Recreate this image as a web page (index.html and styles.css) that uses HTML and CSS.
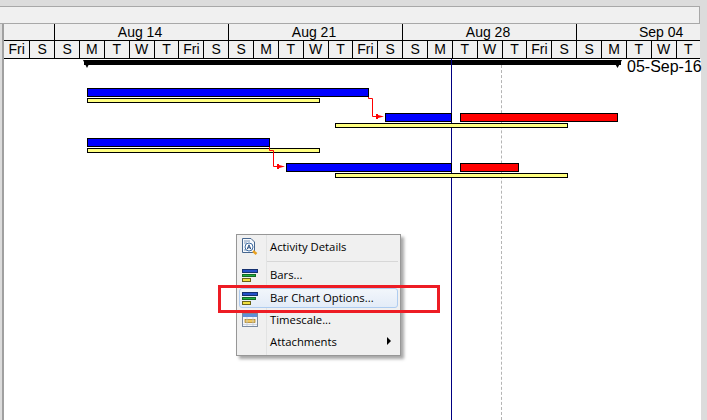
FILE: index.html
```html
<!DOCTYPE html>
<html>
<head>
    <title>Bar Chart</title>
    <link rel="stylesheet" href="styles.css">
</head>
<body>
    <div class="window">
        <div class="toolbar"></div>
        <div class="timescale">
            <div class="months">
                <div class="month first"></div>
                <div class="month">Aug 14</div>
                <div class="month">Aug 21</div>
                <div class="month">Aug 28</div>
                <div class="month last">Sep 04</div>
            </div>
            <div class="days">
                <div class="day fri">Fri</div><div class="day">S</div>
                <div class="day">S</div><div class="day">M</div><div class="day">T</div><div class="day">W</div><div class="day">T</div><div class="day">Fri</div><div class="day">S</div>
                <div class="day">S</div><div class="day">M</div><div class="day">T</div><div class="day">W</div><div class="day">T</div><div class="day">Fri</div><div class="day">S</div>
                <div class="day">S</div><div class="day">M</div><div class="day">T</div><div class="day">W</div><div class="day">T</div><div class="day">Fri</div><div class="day">S</div>
                <div class="day">S</div><div class="day">M</div><div class="day">T</div><div class="day">W</div><div class="day last">T</div>
            </div>
        </div>
        <div class="chart">
            <div class="summary"></div>
            <svg class="summary-caps" width="707" height="20">
                <polygon points="83,0 91,0 87,8"/>
                <polygon points="613,0 622,0 617.5,8"/>
            </svg>
            <div class="finish-date">05-Sep-16</div>

            <div class="today"></div>
            <div class="data-date"></div>

            <div class="bar blue b1"></div>
            <div class="bar yellow y1"></div>
            <div class="bar blue b2"></div>
            <div class="bar red r2"></div>
            <div class="bar yellow y2"></div>
            <div class="bar blue b3"></div>
            <div class="bar yellow y3"></div>
            <div class="bar blue b4"></div>
            <div class="bar red r4"></div>
            <div class="bar yellow y4"></div>

            <svg class="links" width="707" height="130">
                <path d="M368.5 38V39.5H372.5V57.5H378"/>
                <polygon points="376,55 378,55 378,56 384,57.5 378,59 378,60 376,60"/>
                <path d="M269.5 88V91.5H273.5V107.5H279"/>
                <polygon points="277,105 279,105 279,106 285,107.5 279,109 279,110 277,110"/>
            </svg>
        </div>

        <div class="menu">
            <div class="menu-item top">
                <svg class="icon" width="16" height="18" viewBox="0 0 16 18">
                    <path d="M0.5 0.5H9L12.5 4V14.5H0.5Z" fill="#f6f9fd" stroke="#47678f"/>
                    <path d="M2 3H8M2 5H5M2 12H4" stroke="#7f97b8"/>
                    <circle cx="7" cy="9" r="4" fill="#fff" stroke="#3f6da3"/>
                    <path d="M5.2 11.2L7 6.8L8.8 11.2M5.9 9.8H8.1" fill="none" stroke="#2a4f80"/>
                    <path d="M11 13L14.5 16" stroke="#e8a020" stroke-width="2.5"/>
                </svg>
                <span class="label">Activity Details</span>
            </div>
            <div class="menu-sep"></div>
            <div class="menu-item">
                <svg class="icon" width="16" height="13" viewBox="0 0 16 13">
                    <rect x=".5" y=".5" width="15" height="3" fill="#2450c8" stroke="#16306e"/>
                    <rect x=".5" y="5.5" width="13" height="2" fill="#22b040" stroke="#146a28"/>
                    <rect x=".5" y="9.5" width="8" height="3" fill="#f0e040" stroke="#6a6418"/>
                </svg>
                <span class="label">Bars...</span>
            </div>
            <div class="menu-item active">
                <svg class="icon" width="16" height="13" viewBox="0 0 16 13">
                    <rect x=".5" y=".5" width="15" height="3" fill="#2450c8" stroke="#16306e"/>
                    <rect x=".5" y="5.5" width="13" height="2" fill="#22b040" stroke="#146a28"/>
                    <rect x=".5" y="9.5" width="8" height="3" fill="#f0e040" stroke="#6a6418"/>
                </svg>
                <span class="label">Bar Chart Options...</span>
            </div>
            <div class="menu-item">
                <svg class="icon" width="16" height="14" viewBox="0 0 16 14">
                    <rect x=".5" y=".5" width="15" height="13" fill="#f4f6fa" stroke="#7a8aa0"/>
                    <rect x="1" y="1" width="14" height="3" fill="#5f8fd8"/>
                    <rect x="3" y="6.5" width="10" height="3" fill="#f0c860" stroke="#a07820" stroke-width=".7"/>
                    <path d="M1 11.5H15M5 4V13M11 4V13" stroke="#c0c8d4" stroke-width=".7"/>
                </svg>
                <span class="label">Timescale...</span>
            </div>
            <div class="menu-item">
                <span class="icon"></span>
                <span class="label">Attachments</span>
                <span class="arrow"></span>
            </div>
        </div>
        <div class="callout"></div>
    </div>
</body>
</html>
```

FILE: styles.css
```css
html, body {
    margin: 0;
    height: 100%;
    overflow: hidden;
}
.window {
    position: relative;
    width: 707px;
    height: 420px;
    box-sizing: border-box;
    padding: 6px 7px 0 2px;
    background-color: #dcdcdc;
    font-family: "Liberation Sans", Arial, sans-serif;
    color: #000;
    overflow: hidden;
    display: flex;
    flex-direction: column;
}
.toolbar {
    height: 16px;
    flex: none;
    margin-left: -2px;
    background-color: #f0f0f0;
    border-top: 1px solid #a8a8a8;
    border-bottom: 1px solid #a8a8a8;
    border-right: 1px solid #a8a8a8;
}
.timescale {
    flex: none;
    background-color: #f0f0f0;
    border-left: 2px solid #a0a0a0;
    font-size: 14px;
}
.months {
    display: flex;
    height: 16px;
}
.month {
    flex: none;
    width: 174px;
    box-sizing: border-box;
    padding-right: 3px;
    border-right: 1px solid #000;
    text-align: center;
    line-height: 17px;
}
.month.first {
    width: 51px;
    padding-right: 0;
}
.month.last {
    flex: 1;
    border-right: 0;
    padding: 0 0 0 62px;
    text-align: left;
}
.days {
    display: flex;
    height: 17px;
    border-top: 1px solid #000;
    border-bottom: 1px solid #000;
}
.day {
    flex: none;
    width: 24.86px;
    box-sizing: border-box;
    border-right: 1px solid #000;
    text-align: center;
    line-height: 17px;
}
.day.fri {
    width: 26.3px;
}
.day.last {
    flex: 1;
    border-right: 0;
}
.chart {
    position: relative;
    flex: 1;
    margin-right: -1px;
    border-left: 2px solid #a0a0a0;
    background-color: #fff;
}
.summary {
    position: absolute;
    left: 80px;
    top: 1px;
    width: 537px;
    height: 5px;
    background-color: #000;
}
.summary-caps {
    position: absolute;
    left: -4px;
    top: 1px;
}
.finish-date {
    position: absolute;
    left: 623px;
    top: -2px;
    white-space: nowrap;
    font-size: 16px;
    line-height: 20px;
}
.today {
    position: absolute;
    left: 447px;
    top: 0;
    bottom: 0;
    width: 1px;
    background-color: #000080;
}
.data-date {
    position: absolute;
    left: 497px;
    top: 6px;
    bottom: 0;
    border-left: 1px dashed #b4b4b4;
}
.bar {
    position: absolute;
    box-sizing: border-box;
    border: 1px solid #000;
}
.blue {
    background-color: #0000ff;
    height: 9px;
}
.red {
    background-color: #ff0000;
    height: 9px;
}
.yellow {
    background-color: #ffff80;
    height: 5px;
}
.b1 { left: 83px; top: 29px; width: 282px; }
.y1 { left: 83px; top: 39px; width: 233px; }
.b2 { left: 381px; top: 54px; width: 67px; }
.r2 { left: 456px; top: 54px; width: 158px; }
.y2 { left: 331px; top: 64px; width: 233px; }
.b3 { left: 83px; top: 79px; width: 183px; }
.y3 { left: 83px; top: 89px; width: 233px; }
.b4 { left: 282px; top: 104px; width: 166px; }
.r4 { left: 456px; top: 104px; width: 59px; }
.y4 { left: 331px; top: 114px; width: 233px; }
.links {
    position: absolute;
    left: -4px;
    top: 0;
}
.links path {
    fill: none;
    stroke: #ff0000;
}
.links polygon {
    fill: #ff0000;
}
.menu {
    position: absolute;
    left: 236px;
    top: 234px;
    width: 165px;
    height: 122px;
    box-sizing: border-box;
    padding: 2px;
    background-color: #f0f0f0;
    border: 1px solid #979797;
    box-shadow: 3px 3px 3px rgba(0, 0, 0, 0.35);
    font-family: "Open Sans", sans-serif;
    font-size: 11.3px;
    background-image: linear-gradient(#e2e3e3, #e2e3e3);
    background-repeat: no-repeat;
    background-size: 1px 100%;
    background-position: 29px 0;
}
.menu-item {
    position: relative;
    display: flex;
    align-items: center;
    height: 22px;
    box-sizing: border-box;
}
.menu-item.top {
    height: 20px;
}
.menu-item.active {
    height: 20px;
    margin: 2px 0 1px;
    border: 1px solid #aeccf0;
    border-radius: 3px;
    background: linear-gradient(#f2f6fb, #e3ecf8);
}
.menu-item.active .icon {
    margin-left: 2px;
}
.icon {
    flex: none;
    display: block;
    width: 16px;
    margin: 0 12px 0 3px;
}
.label {
    margin-bottom: 2px;
}
.menu-sep {
    height: 1px;
    margin: 4px 0 2px 28px;
    background-color: #d7d7d7;
}
.arrow {
    position: absolute;
    right: 7px;
    top: 6px;
    border-left: 4px solid #000;
    border-top: 4px solid transparent;
    border-bottom: 4px solid transparent;
}
.callout {
    position: absolute;
    left: 218px;
    top: 285px;
    width: 222px;
    height: 28px;
    box-sizing: border-box;
    border: 3px solid #ed1c24;
}
```
